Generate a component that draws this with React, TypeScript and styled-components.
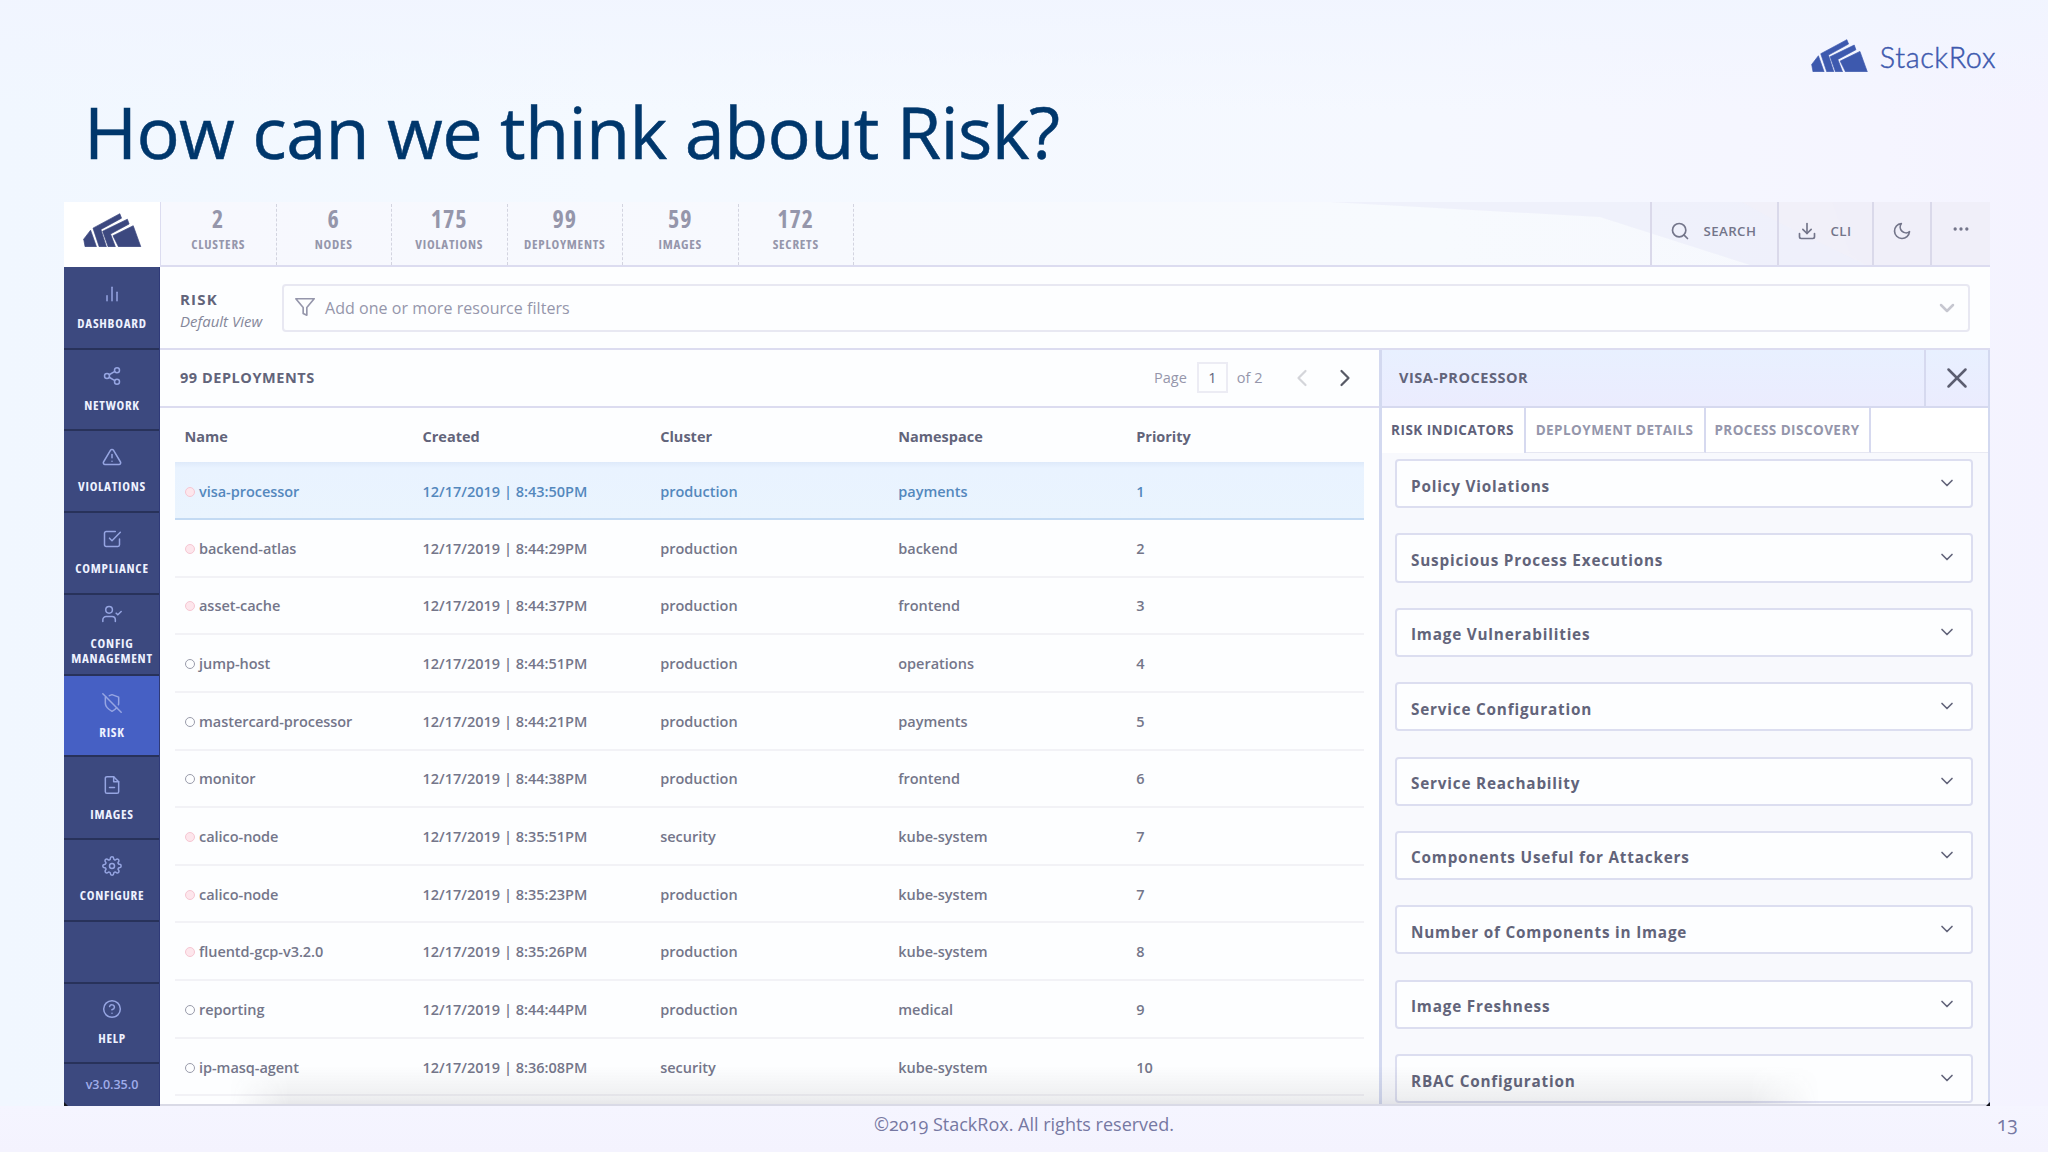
import React from "react";
import styled, { createGlobalStyle, css } from "styled-components";
import {
  FiAlertTriangle,
  FiBarChart2,
  FiCheckSquare,
  FiChevronDown,
  FiChevronLeft,
  FiChevronRight,
  FiDownload,
  FiFileMinus,
  FiFilter,
  FiHelpCircle,
  FiMoon,
  FiMoreHorizontal,
  FiSearch,
  FiSettings,
  FiShare2,
  FiShieldOff,
  FiUserCheck,
  FiX,
} from "react-icons/fi";
import type { IconType } from "react-icons";

const GlobalStyle = createGlobalStyle`
  *, *::before, *::after { box-sizing: border-box; }
  html, body { margin: 0; padding: 0; }
  body {
    font-family: "Open Sans", "Noto Sans", sans-serif;
    color: #6b6d80;
  }
`;

const line = "#dcdcf0";
const ink = "#62647a";
const muted = "#9596ab";

/* ---------- slide ---------- */

const Slide = styled.main`
  width: 2048px;
  height: 1152px;
  overflow: hidden;
  display: flex;
  flex-direction: column;
  background:
    linear-gradient(180deg, rgba(241, 245, 255, 0.9) 0, rgba(241, 245, 255, 0) 110px),
    linear-gradient(90deg, #f1f7ff 0, #f4f9ff 30%, #f5f8ff 70%, #f5f5ff 92%, #f4f3ff 100%);
`;

const SlideHeader = styled.header`
  height: 202px;
  flex: none;
  display: flex;
  justify-content: space-between;
  align-items: flex-start;
  padding: 0 52px 0 84px;
`;

const Title = styled.h1`
  margin: 82px 0 0;
  font-size: 72px;
  line-height: 98px;
  font-weight: 400;
  letter-spacing: -0.65px;
  color: #00376c;
  white-space: nowrap;
  -webkit-text-stroke: 0.5px currentColor;
`;

const Brand = styled.div`
  margin-top: 39px;
  height: 33px;
  display: flex;
  align-items: center;
  gap: 12px;
  color: #3d59ae;
`;

const BrandName = styled.span`
  padding-top: 4px;
  font-family: "Lato", sans-serif;
  font-weight: 300;
  font-size: 28.8px;
  line-height: 33px;
  letter-spacing: 0.6px;
  -webkit-text-stroke: 0.45px currentColor;
`;

const SlideFooter = styled.footer`
  flex: 1;
  display: grid;
  grid-template-columns: 1fr auto 1fr;
  align-items: start;
  padding: 2px 30px 0 30px;
  background: linear-gradient(180deg, #f5f5ff, #f4f3fe);
  color: #7678a2;
  font-feature-settings: "onum";
`;

const Copyright = styled.span`
  grid-column: 2;
  font-size: 18px;
  line-height: 32px;
`;

const PageNumber = styled.span`
  justify-self: end;
  font-size: 19.5px;
  line-height: 32px;
`;

/* ---------- application frame ---------- */

const Frame = styled.section`
  position: relative;
  flex: none;
  width: 1926px;
  height: 904px;
  margin-left: 64px;
  display: flex;
  overflow: hidden;
  background: #fdfeff;
`;

const DockShadow = styled.div`
  position: absolute;
  left: 165px;
  right: 170px;
  bottom: 0;
  height: 40px;
  background: linear-gradient(180deg, rgba(60, 60, 66, 0), rgba(60, 60, 66, 0.08) 80%, rgba(60, 60, 66, 0.13));
  mask-image: linear-gradient(90deg, transparent, #000 60px, #000 calc(100% - 70px), transparent);
`;

const BottomEdge = styled.div`
  position: absolute;
  left: 96px;
  right: 0;
  bottom: 0;
  height: 2px;
  background: #d9dae6;
`;

const Corner = styled.i<{ $side: "left" | "right" }>`
  position: absolute;
  bottom: 0;
  ${(p) => p.$side}: 0;
  width: 4px;
  height: 4px;
  background: #14151d;
  clip-path: ${(p) => (p.$side === "left" ? "polygon(0 0, 100% 100%, 0 100%)" : "polygon(100% 0, 100% 100%, 0 100%)")};
`;

/* ---------- sidebar ---------- */

const Sidebar = styled.nav`
  width: 96px;
  flex: none;
  display: flex;
  flex-direction: column;
  background: #3c497f;
  border-right: 1px solid #2f3a78;
`;

const LogoCell = styled.div`
  height: 65px;
  width: 96px;
  flex: none;
  display: flex;
  align-items: flex-start;
  justify-content: center;
  padding: 11px 0 0 1px;
  background: #fff;
  color: #3c487f;
`;

const NavItem = styled.a<{ $height: number; $top?: number; $active?: boolean }>`
  height: ${(p) => p.$height}px;
  flex: none;
  display: flex;
  flex-direction: column;
  align-items: center;
  gap: 12px;
  padding: ${(p) => p.$top ?? 16}px 0 0 1px;
  border-bottom: 2px solid #28325a;
  background: ${(p) => (p.$active ? "#4660c4" : "transparent")};
  color: #eef2ff;
  text-align: center;
  font-size: 13px;
  line-height: 15px;
  font-weight: 700;
  font-stretch: 75%;
  letter-spacing: 0.75px;
  text-transform: uppercase;

  svg {
    flex: none;
    width: 20px;
    height: 20px;
    stroke-width: 1.8;
    color: #96a5e2;
  }
`;

const NavSpacer = styled.div`
  flex: 1;
  border-bottom: 2px solid #28325a;
`;

const Version = styled.div`
  height: 42px;
  flex: none;
  display: flex;
  align-items: center;
  justify-content: center;
  padding: 0 0 2px 1px;
  color: #a0adeb;
  font-size: 12.5px;
  font-weight: 600;
`;

/* ---------- top bar ---------- */

const Content = styled.div`
  flex: 1;
  min-width: 0;
  display: flex;
  flex-direction: column;
`;

const TopBar = styled.div`
  position: relative;
  height: 65px;
  flex: none;
  display: flex;
  border-left: 1px solid ${line};
  border-bottom: 2px solid ${line};
  background: linear-gradient(90deg, #f7f8fe, #f7fafe 70%, #f6f7fd);
`;

const Facets = styled.svg`
  position: absolute;
  right: 0;
  top: 0;
  width: 670px;
  height: 63px;
`;

const Stat = styled.div`
  width: 115.5px;
  margin-top: 2px;
  display: flex;
  flex-direction: column;
  align-items: center;
  border-right: 1.5px dashed #d3d4e0;
  color: ${muted};
  font-stretch: 75%;
`;

const StatValue = styled.span`
  font-size: 24px;
  line-height: 30px;
  font-weight: 700;
  letter-spacing: 1px;
`;

const StatLabel = styled.span`
  font-size: 13px;
  line-height: 20px;
  font-weight: 700;
  letter-spacing: 0.75px;
`;

const Actions = styled.div`
  position: relative;
  margin-left: auto;
  display: flex;
`;

const Action = styled.button<{ $width: number; $wide?: boolean; $lift?: number }>`
  width: ${(p) => p.$width}px;
  display: flex;
  align-items: center;
  justify-content: ${(p) => (p.$wide ? "flex-start" : "center")};
  gap: 14px;
  padding: 0 0 ${(p) => p.$lift ?? 5}px ${(p) => (p.$wide ? 18 : 0)}px;
  border: 0;
  border-left: 2px solid #dad9ea;
  background: none;
  color: #73758a;
  font: 600 13.3px "Open Sans", sans-serif;
  letter-spacing: 0.4px;

  svg {
    width: 20px;
    height: 20px;
  }
`;

/* ---------- filter row ---------- */

const FilterRow = styled.div`
  height: 83px;
  flex: none;
  display: flex;
  align-items: center;
  padding: 0 20px 0 20px;
  border-bottom: 2px solid ${line};
`;

const ViewName = styled.div`
  width: 102px;
  display: flex;
  flex-direction: column;
  padding-top: 4px;
`;

const ViewTitle = styled.strong`
  font-size: 15px;
  line-height: 22px;
  font-weight: 700;
  letter-spacing: 1.2px;
  color: ${ink};
`;

const ViewSub = styled.em`
  font-size: 15px;
  line-height: 22px;
  color: #85879a;
`;

const FilterBox = styled.div`
  flex: 1;
  height: 48px;
  display: flex;
  align-items: center;
  padding: 0 9px 0 10px;
  margin-top: 1px;
  border: 2px solid #e8e8f2;
  border-radius: 4px;
  color: ${muted};

  > svg:first-child {
    width: 22px;
    height: 22px;
    margin: -3px 9px 0 0;
    stroke-width: 1.8;
  }
  > svg:last-child {
    width: 24px;
    height: 24px;
    margin-left: auto;
    color: #c6c7d0;
    stroke-width: 2.5;
  }
`;

const Placeholder = styled.span`
  font-size: 16px;
  line-height: 22px;
  font-weight: 500;
  letter-spacing: 0.05px;
`;

/* ---------- deployments table ---------- */

const Panels = styled.div`
  flex: 1;
  min-height: 0;
  display: flex;
`;

const ListPanel = styled.section`
  width: 1218.5px;
  flex: none;
  display: flex;
  flex-direction: column;
`;

const PanelHeader = styled.div`
  height: 58px;
  flex: none;
  display: flex;
  align-items: center;
  justify-content: space-between;
  padding: 0 20px 1px 20px;
  border-bottom: 2px solid ${line};
`;

const PanelTitle = styled.h2`
  margin: 0;
  font-size: 14.5px;
  line-height: 20px;
  font-weight: 700;
  letter-spacing: 0.55px;
  color: ${ink};
`;

const Pager = styled.div`
  display: flex;
  align-items: center;
  font-size: 14.5px;
  color: ${muted};
`;

const PageInput = styled.span`
  width: 31px;
  height: 31px;
  margin: 0 9px 0 10px;
  display: flex;
  align-items: center;
  justify-content: center;
  border: 2px solid #ececf4;
  color: ${ink};
  font-weight: 500;
`;

const PagerArrow = styled.span<{ $disabled?: boolean }>`
  display: flex;
  margin-left: ${(p) => (p.$disabled ? 25 : 15)}px;
  color: ${(p) => (p.$disabled ? "#d4d5da" : "#585a66")};

  svg {
    width: 28px;
    height: 28px;
    stroke-width: 1.9;
  }
`;

const Table = styled.div`
  margin: 0 15px 0 14.5px;
  display: flex;
  flex-direction: column;
`;

const rowGrid = css`
  flex: none;
  display: grid;
  grid-template-columns: 238px 237.7px 238px 238px 1fr;
  align-items: center;
  padding-left: 10px;
  font-size: 14.5px;
  line-height: 20px;
  white-space: nowrap;
`;

const HeadRow = styled.div`
  ${rowGrid}
  height: 54px;
  padding-top: 4px;
  font-weight: 700;
  color: ${ink};
`;

const Row = styled.div<{ $selected?: boolean }>`
  ${rowGrid}
  height: ${(p) => (p.$selected ? 58 : 57.65)}px;
  padding-top: ${(p) => (p.$selected ? 4 : 2)}px;
  border-bottom: 2px solid ${(p) => (p.$selected ? "#c3daf3" : "#f2f2f6")};
  background: ${(p) => (p.$selected ? "linear-gradient(180deg, #deeafa 0, #e9f3ff 6px, #eaf4fe)" : "none")};
  color: ${(p) => (p.$selected ? "#5488bd" : "#74768a")};
  font-weight: 600;
`;

const NameCell = styled.span`
  display: flex;
  align-items: center;
  gap: 4.5px;
  letter-spacing: -0.04px;
`;

const Dot = styled.i<{ $alert?: boolean }>`
  width: 10px;
  height: 10px;
  border-radius: 50%;
  border: 1.8px solid ${(p) => (p.$alert ? "#f6c6d2" : "#9a9cab")};
  background: ${(p) => (p.$alert ? "#fde6ec" : "transparent")};
`;

/* ---------- details panel ---------- */

const DetailPanel = styled.section`
  flex: 1;
  min-width: 0;
  display: flex;
  flex-direction: column;
  border-left: 3px solid #d3d9f0;
  border-right: 2px solid #d3d9f0;
`;

const DetailHeader = styled.div`
  height: 58px;
  flex: none;
  display: flex;
  align-items: stretch;
  justify-content: space-between;
  border-bottom: 2px solid #d6d9ef;
  background: linear-gradient(180deg, #e8f0ff, #ebecfe);

  ${PanelTitle} {
    padding: 18px 0 0 17.5px;
  }
`;

const Close = styled.button`
  width: 64px;
  display: flex;
  align-items: center;
  justify-content: center;
  padding: 0 1px 1px 0;
  border: 0;
  border-left: 2px solid #d6d9ef;
  background: none;
  color: #5c5e70;

  svg {
    width: 34px;
    height: 34px;
    stroke-width: 1.8;
  }
`;

const Tabs = styled.div`
  height: 44.5px;
  flex: none;
  display: flex;
  background: #fff;
`;

const Tab = styled.button<{ $width: number; $active?: boolean }>`
  width: ${(p) => p.$width}px;
  padding: 0;
  border: 0;
  border-right: 2px solid #d6d9ef;
  border-bottom: ${(p) => (p.$active ? "0" : "1px solid #e6e7f2")};
  background: none;
  color: ${(p) => (p.$active ? "#5f617a" : muted)};
  font: 700 13.5px "Open Sans", sans-serif;
  letter-spacing: 0.45px;
  white-space: nowrap;
`;

const TabFill = styled.div`
  flex: 1;
  border-bottom: 1px solid #e9eaf3;
`;

const Cards = styled.div`
  flex: 1;
  min-height: 0;
  overflow: hidden;
  display: flex;
  flex-direction: column;
  gap: 25.2px;
  padding: 6.5px 15px 0 13px;
  background: #f8f9fd;
`;

const Card = styled.div`
  height: 49.2px;
  flex: none;
  display: flex;
  align-items: center;
  justify-content: space-between;
  padding: 0 14px 0 14.5px;
  border: 2px solid #dcdef0;
  border-radius: 4px;
  background: #fdfeff;
  color: ${ink};

  svg {
    width: 20px;
    height: 20px;
    margin-bottom: 1px;
  }
`;

const CardTitle = styled.span`
  padding-top: 4px;
  font-size: 15.3px;
  line-height: 20px;
  font-weight: 700;
  letter-spacing: 0.8px;
`;

/* ---------- data ---------- */

const nav: { label: string; icon: IconType; height: number; active?: boolean; top?: number }[] = [
  { label: "Dashboard", icon: FiBarChart2, height: 83, top: 17 },
  { label: "Network", icon: FiShare2, height: 81 },
  { label: "Violations", icon: FiAlertTriangle, height: 82 },
  { label: "Compliance", icon: FiCheckSquare, height: 82 },
  { label: "Config Management", icon: FiUserCheck, height: 81, top: 9 },
  { label: "Risk", icon: FiShieldOff, height: 81, top: 17, active: true },
  { label: "Images", icon: FiFileMinus, height: 83, top: 18 },
  { label: "Configure", icon: FiSettings, height: 82 },
];

const stats = [
  ["2", "CLUSTERS"],
  ["6", "NODES"],
  ["175", "VIOLATIONS"],
  ["99", "DEPLOYMENTS"],
  ["59", "IMAGES"],
  ["172", "SECRETS"],
];

const deployments: [string, string, string, string, number, boolean][] = [
  ["visa-processor", "8:43:50PM", "production", "payments", 1, true],
  ["backend-atlas", "8:44:29PM", "production", "backend", 2, true],
  ["asset-cache", "8:44:37PM", "production", "frontend", 3, true],
  ["jump-host", "8:44:51PM", "production", "operations", 4, false],
  ["mastercard-processor", "8:44:21PM", "production", "payments", 5, false],
  ["monitor", "8:44:38PM", "production", "frontend", 6, false],
  ["calico-node", "8:35:51PM", "security", "kube-system", 7, true],
  ["calico-node", "8:35:23PM", "production", "kube-system", 7, true],
  ["fluentd-gcp-v3.2.0", "8:35:26PM", "production", "kube-system", 8, true],
  ["reporting", "8:44:44PM", "production", "medical", 9, false],
  ["ip-masq-agent", "8:36:08PM", "security", "kube-system", 10, false],
];

const indicators = [
  "Policy Violations",
  "Suspicious Process Executions",
  "Image Vulnerabilities",
  "Service Configuration",
  "Service Reachability",
  "Components Useful for Attackers",
  "Number of Components in Image",
  "Image Freshness",
  "RBAC Configuration",
];

const StackMark = ({ width }: { width: number }) => (
  <svg width={width} height={width * 0.582} viewBox="0 0 170 99" fill="currentColor" stroke="currentColor" strokeWidth="2" strokeLinejoin="round">
    <path d="M2 76 L22 50 L39 98 L6 98 Z" />
    <path d="M29 44 L107 2 L112 15 L52 48 L68 98 L47 98 Z" />
    <path d="M57 53 L129 18 L134 32 L80 61 L94 98 L73 98 Z" />
    <path d="M87 66 L146 37 L168 98 L103 98 Z" />
  </svg>
);

export default function App() {
  return (
    <Slide>
      <GlobalStyle />
      <SlideHeader>
        <Title>How can we think about Risk?</Title>
        <Brand>
          <StackMark width={57} />
          <BrandName>StackRox</BrandName>
        </Brand>
      </SlideHeader>

      <Frame>
        <Sidebar>
          <LogoCell>
            <StackMark width={58.5} />
          </LogoCell>
          {nav.map(({ label, icon: Icon, height, active, top }) => (
            <NavItem key={label} $height={height} $active={active} $top={top}>
              <Icon />
              {label}
            </NavItem>
          ))}
          <NavSpacer />
          <NavItem $height={80} $top={15}>
            <FiHelpCircle />
            Help
          </NavItem>
          <Version>v3.0.35.0</Version>
        </Sidebar>

        <Content>
          <TopBar>
            <Facets viewBox="0 0 670 63">
              <path d="M10 0 H670 V63 H430 L280 15 Z" fill="#ecedfa" opacity="0.75" />
              <path d="M422 0 H670 V63 H546 L458 20 Z" fill="#f2eff8" opacity="0.7" />
              <path d="M512 0 H670 V63 H546 L530 52 Z" fill="#f0eef8" opacity="0.6" />
            </Facets>
            {stats.map(([value, label]) => (
              <Stat key={label}>
                <StatValue>{value}</StatValue>
                <StatLabel>{label}</StatLabel>
              </Stat>
            ))}
            <Actions>
              <Action $width={127} $wide>
                <FiSearch />
                SEARCH
              </Action>
              <Action $width={95} $wide>
                <FiDownload />
                CLI
              </Action>
              <Action $width={58.5}>
                <FiMoon />
              </Action>
              <Action $width={60} $lift={9}>
                <FiMoreHorizontal />
              </Action>
            </Actions>
          </TopBar>

          <FilterRow>
            <ViewName>
              <ViewTitle>RISK</ViewTitle>
              <ViewSub>Default View</ViewSub>
            </ViewName>
            <FilterBox>
              <FiFilter />
              <Placeholder>Add one or more resource filters</Placeholder>
              <FiChevronDown />
            </FilterBox>
          </FilterRow>

          <Panels>
            <ListPanel>
              <PanelHeader>
                <PanelTitle>99 DEPLOYMENTS</PanelTitle>
                <Pager>
                  Page
                  <PageInput>1</PageInput>
                  of 2
                  <PagerArrow $disabled>
                    <FiChevronLeft />
                  </PagerArrow>
                  <PagerArrow>
                    <FiChevronRight />
                  </PagerArrow>
                </Pager>
              </PanelHeader>
              <Table>
                <HeadRow>
                  <span>Name</span>
                  <span>Created</span>
                  <span>Cluster</span>
                  <span>Namespace</span>
                  <span>Priority</span>
                </HeadRow>
                {deployments.map(([name, time, cluster, namespace, priority, alert], i) => (
                  <Row key={i} $selected={i === 0}>
                    <NameCell>
                      <Dot $alert={alert} />
                      {name}
                    </NameCell>
                    <span>12/17/2019 | {time}</span>
                    <span>{cluster}</span>
                    <span>{namespace}</span>
                    <span>{priority}</span>
                  </Row>
                ))}
              </Table>
            </ListPanel>

            <DetailPanel>
              <DetailHeader>
                <PanelTitle>VISA-PROCESSOR</PanelTitle>
                <Close>
                  <FiX />
                </Close>
              </DetailHeader>
              <Tabs>
                <Tab $width={144} $active>
                  RISK INDICATORS
                </Tab>
                <Tab $width={180}>DEPLOYMENT DETAILS</Tab>
                <Tab $width={165}>PROCESS DISCOVERY</Tab>
                <TabFill />
              </Tabs>
              <Cards>
                {indicators.map((title) => (
                  <Card key={title}>
                    <CardTitle>{title}</CardTitle>
                    <FiChevronDown />
                  </Card>
                ))}
              </Cards>
            </DetailPanel>
          </Panels>
        </Content>
        <DockShadow />
        <BottomEdge />
        <Corner $side="left" />
        <Corner $side="right" />
      </Frame>

      <SlideFooter>
        <Copyright>©2019 StackRox. All rights reserved.</Copyright>
        <PageNumber>13</PageNumber>
      </SlideFooter>
    </Slide>
  );
}
